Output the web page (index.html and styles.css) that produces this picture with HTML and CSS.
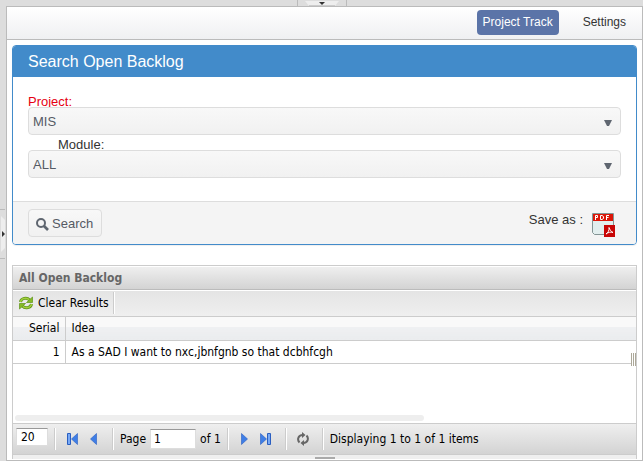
FILE: index.html
```html
<!DOCTYPE html>
<html lang="en">
<head>
<meta charset="utf-8">
<title>Open Backlog</title>
<link rel="stylesheet" href="styles.css">
</head>
<body>
<div class="north">
  <button class="toggle-north" aria-label="Toggle header"><svg width="34" height="5" viewBox="0 0 34 5"><path d="M0 0H34L30 5H4Z" fill="#eee"/><path d="M4 4.5H30" stroke="#ccc"/><path d="M14 1H20L17 4Z" fill="#333"/></svg></button>
</div>
<div class="west">
  <button class="toggle-west" aria-label="Toggle sidebar"><svg width="5" height="36" viewBox="0 0 5 36"><path d="M1 0L5 4V32L1 36Z" fill="#eee"/><path d="M2 15L5 18L2 21Z" fill="#333"/></svg></button>
</div>
<main class="center">
  <nav class="nav">
    <a class="nav-link active" href="#track">Project Track</a>
    <a class="nav-link" href="#settings">Settings</a>
  </nav>
  <div class="content">
    <form class="panel">
      <h2 class="panel-title">Search Open Backlog</h2>
      <div class="panel-body">
        <label class="label required" for="project">Project:</label>
        <div class="picker"><select id="project" class="select"><option>MIS</option></select><svg class="caret" width="8" height="6" viewBox="0 0 8 6"><path d="M0 0H8L5 6H3Z" fill="#5f6670"/></svg></div>
        <label class="label indented" for="module">Module:</label>
        <div class="picker"><select id="module" class="select"><option>ALL</option></select><svg class="caret" width="8" height="6" viewBox="0 0 8 6"><path d="M0 0H8L5 6H3Z" fill="#5f6670"/></svg></div>
      </div>
      <div class="panel-footer">
        <button type="button" class="search"><svg width="13" height="13" viewBox="0 0 13 13" fill="none" stroke="#5f6670"><circle cx="5" cy="5" r="4" stroke-width="2"/><path d="M8 8L12 12" stroke-width="2.6"/></svg>Search</button>
        <div class="export">
          <span class="export-label">Save as :</span>
          <button type="button" class="pdf" aria-label="PDF"><svg width="23" height="24" viewBox="0 0 23 24">
            <path d="M.5.5H21.5V21.5H2.5L.5 19.5Z" fill="#e2eeee" stroke="#839494"/>
            <path d="M1 1H21V8H1Z" fill="#dc1608"/>
            <path d="M3.500 7V2.500H5.500V4.500H3.500M8.500 2.500H10L11.500 3.500V5.500L10 6.500H8.500ZM14.500 7V2.500H17M14.500 4.500H16.500" fill="none" stroke="#fff"/>
            <path d="M12 12H23V24H12Z" fill="#c80606"/>
            <path d="M14 21C16 20 17.500 17 17 14.500C18 17 19 18.500 21 19.500C18.500 18.500 16 19.500 14 21Z" fill="none" stroke="#fff"/>
          </svg></button>
        </div>
      </div>
    </form>
    <section class="grid">
      <h3 class="grid-title">All Open Backlog</h3>
      <div class="toolbar">
        <button class="clear"><svg width="14" height="14" viewBox="0 0 14 14" fill="none" stroke-width="3"><path d="M1.500 6C2 2 8 1 10.500 4" stroke="#5f9418"/><path d="M12.500 8C12 12 6 13 3.500 10" stroke="#5f9418"/><path d="M1.500 6C2 2 8 1 10.500 4M12.500 8C12 12 6 13 3.500 10" stroke="#a2cf3c" stroke-width="1.500"/><path d="M13.500 1V6.500H7.500ZM.5 13V7.500H6.500Z" fill="#86bb27" stroke="#5f9418" stroke-width=".7"/></svg>Clear Results</button>
        <i class="sep"></i>
      </div>
      <div class="rows">
        <table class="table">
          <thead><tr><th class="serial">Serial</th><th>Idea</th></tr></thead>
          <tbody><tr><td class="serial">1</td><td>As a SAD I want to nxc,jbnfgnb so that dcbhfcgh</td></tr></tbody>
        </table>
        <span class="grip"></span>
        <div class="scroll"><div class="thumb"></div></div>
      </div>
      <div class="pager">
        <input class="size" aria-label="Rows per page" value="20">
        <i class="sep"></i>
        <div class="steps">
          <button class="step" aria-label="First page"><svg width="11" height="12" viewBox="0 0 11 12"><path d="M.5.5H3.500V11.500H.5Z" fill="#78a9f5" stroke="#2a5ec0"/><path d="M10.500.5V11.500L4.500 6Z" fill="#3f7ee6" stroke="#2a5ec0" stroke-width=".6"/></svg></button>
          <button class="step" aria-label="Previous page"><svg width="11" height="12" viewBox="0 0 11 12"><path d="M8.500.5V11.500L2.500 6Z" fill="#3f7ee6" stroke="#2a5ec0" stroke-width=".6"/></svg></button>
        </div>
        <i class="sep"></i>
        <div class="paging">
          <label for="page">Page</label>
          <input id="page" class="page" value="1">
          <span>of 1</span>
        </div>
        <i class="sep"></i>
        <div class="steps">
          <button class="step" aria-label="Next page"><svg width="11" height="12" viewBox="0 0 11 12"><path d="M2.500.5V11.500L8.500 6Z" fill="#3f7ee6" stroke="#2a5ec0" stroke-width=".6"/></svg></button>
          <button class="step" aria-label="Last page"><svg width="11" height="12" viewBox="0 0 11 12"><path d="M.5.5V11.500L6.500 6Z" fill="#3f7ee6" stroke="#2a5ec0" stroke-width=".6"/><path d="M7.500.5H10.500V11.500H7.500Z" fill="#78a9f5" stroke="#2a5ec0"/></svg></button>
        </div>
        <i class="sep"></i>
        <div class="steps">
          <button class="step" aria-label="Reload"><svg width="12" height="14" viewBox="0 0 12 14" fill="none" stroke="#666" stroke-width="2"><path d="M2.500 10.500C0 8 1 3.500 5 3M9.500 3.500C12 6 11 10.500 7 11"/><path d="M5 0L8.500 3L5 6ZM7 8L3.500 11L7 14Z" fill="#666" stroke="none"/></svg></button>
        </div>
        <i class="sep"></i>
        <span>Displaying 1 to 1 of 1 items</span>
      </div>
      <div class="resize"></div>
    </section>
  </div>
</main>
</body>
</html>
```
FILE: styles.css
```css
* { box-sizing: border-box; }
body {
  margin: 0;
  min-height: 100vh;
  display: grid;
  grid-template: 6px 1fr / 6px 1fr;
  background: #ddd;
  color: #333;
  font: 13px/16px "Liberation Sans", Arial, sans-serif;
}
button { padding: 0; border: 0; background: none; font: inherit; color: inherit; }
svg { display: block; flex: none; }
h2, h3 { margin: 0; font-weight: normal; }

.north { grid-column: 1 / 3; display: flex; justify-content: center; }
.toggle-north { padding: 0 7px; border: solid #bbb; border-width: 0 1px; }
.west { display: flex; align-items: center; }
.toggle-west { padding: 6px 0; border: solid #bbb; border-width: 1px 0; }
.center { display: flex; flex-direction: column; border: 1px solid #bbb; background: #fff; }

.nav {
  display: flex;
  justify-content: flex-end;
  gap: 12px;
  padding: 3px 4px 4px;
  border-bottom: 1px solid #bbb;
  background: linear-gradient(#fff, #eff0f2);
}
.nav-link { padding: 0 12px; font-size: 12px; line-height: 25px; color: #333; text-decoration: none; }
.nav-link.active { padding: 0 6px; border-radius: 4px; background: #5b74a8; color: #fff; }

.content { flex: 1; display: flex; flex-direction: column; gap: 20px; padding: 5px 5px 0; }
.panel { border: 1px solid #428bca; border-radius: 4px; overflow: hidden; box-shadow: 0 1px 1px #0001; }
.panel-title { padding: 0 15px; background: #428bca; color: #fff; font-size: 16px; line-height: 31px; }
.panel-body { padding: 17px 15px 23px; }
.label { display: block; height: 13px; }
.required { color: #e60012; }
.indented { margin: 2px 0 0 30px; }
.picker { position: relative; }
.select {
  display: block;
  width: 100%;
  height: 28px;
  padding: 2px 4px 0;
  appearance: none;
  border: 1px solid #ddd;
  border-radius: 4px;
  background: linear-gradient(#f8f8f8, #f1f1f1);
  color: #555a64;
  font: inherit;
}
.caret { position: absolute; right: 9px; top: 13px; pointer-events: none; }
.panel-footer {
  display: flex;
  justify-content: space-between;
  padding: 7px 21px 7px 15px;
  border-top: 1px solid #ddd;
  background: #f4f4f4;
}
.search {
  display: flex;
  align-items: center;
  gap: 3px;
  height: 28px;
  padding: 2px 8px 0 7px;
  border: 1px solid #ddd;
  border-radius: 4px;
  background: linear-gradient(#f8f8f8, #f1f1f1);
  color: #555a64;
}
.export { display: flex; gap: 9px; }
.export-label { padding-top: 3px; }
.pdf { align-self: flex-end; }

.grid {
  flex: 1;
  display: flex;
  flex-direction: column;
  margin-bottom: 1px;
  border: 1px solid #ccc;
  border-bottom: 0;
  color: #000;
  font: 12px/16px "DejaVu Sans Condensed", Tahoma, sans-serif;
}
.grid-title {
  padding: 3px 6px;
  border-top: 1px solid #fff;
  border-bottom: 1px solid #bbb;
  background: linear-gradient(#efefef, #d3d3d3);
  color: #666;
  font-size: 12px;
  font-weight: bold;
}
.toolbar { display: flex; padding: 1px 6px 2px; border-top: 1px solid #fff; border-bottom: 1px solid #ccc; background: linear-gradient(#e4e4e4, #efefef); }
.clear { display: flex; align-items: center; gap: 5px; margin-right: 4px; }
.sep { width: 2px; height: 22px; border-left: 1px solid #ccc; border-right: 1px solid #fff; }
.rows { position: relative; flex: 1; display: flex; flex-direction: column; justify-content: space-between; min-height: 100px; }
.table { width: 100%; border-collapse: collapse; }
.table th, .table td { padding: 3px 6px; border-bottom: 1px solid #ccc; text-align: left; font-weight: normal; }
.table th { padding-bottom: 4px; background: linear-gradient(#f9f9f9 0 42%, #eff0f2 42%, #eaecee); }
.table .serial { width: 52px; border-right: 1px solid #ccc; text-align: right; padding-right: 5px; }
.grip { position: absolute; right: 0; top: 36px; width: 5px; height: 13px; background: repeating-linear-gradient(90deg, #aca899 0 1px, #fff 1px 2px); }
.scroll { padding: 0 2px 2px; }
.thumb { width: 66%; height: 6px; border-radius: 3px; background: #eee; }
.pager {
  display: flex;
  align-items: center;
  gap: 6px;
  padding: 4px 3px;
  border-top: 1px solid #ccc;
  border-bottom: 1px solid #ccc;
  background: linear-gradient(#efefef, #d3d3d3);
}
.size, .page { width: 32px; height: 18px; padding: 0 4px; border: 1px solid #ddd; border-top-color: #999; background: #fff; color: inherit; font: inherit; }
.size { align-self: flex-start; }
.page { width: 46px; height: 20px; padding: 0 3px; }
.paging { display: flex; align-items: center; gap: 4px; }
.steps { display: flex; gap: 7px; padding: 0 6px 0 3px; }
.step { display: grid; place-items: center; width: 14px; height: 22px; }
.resize { height: 4px; background: linear-gradient(#aaa, #aaa) center bottom / 20px 2px no-repeat #efefef; }
```
